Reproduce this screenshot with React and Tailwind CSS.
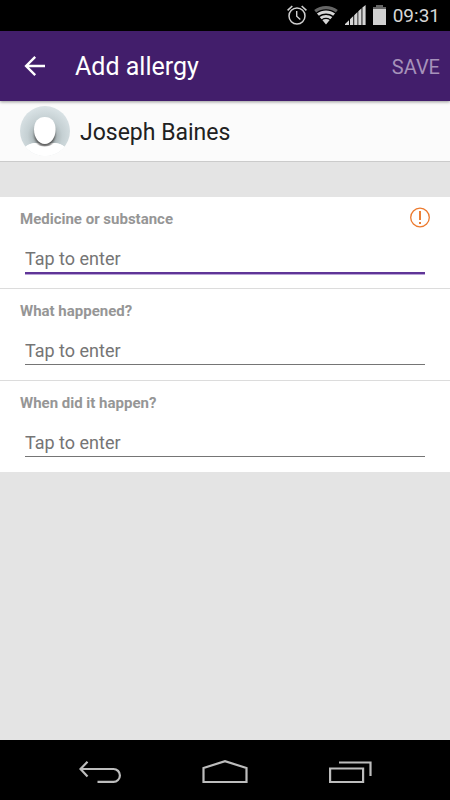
import React, { useState } from "react";

const FIELDS = [
  { id: "substance", label: "Medicine or substance", active: true, required: true },
  { id: "reaction", label: "What happened?" },
  { id: "date", label: "When did it happen?" },
];

export default function App() {
  const [values, setValues] = useState({});

  const handleChange = (id, value) => {
    setValues((prev) => ({ ...prev, [id]: value }));
  };

  return (
    <div className="min-h-screen flex flex-col bg-[#e4e4e4] font-['Roboto',sans-serif]">
      <StatusBar />
      <header className="relative z-10 flex items-center h-[70px] pt-[2px] pl-5 pr-[10px] bg-[#421e6b] shadow-[0_1px_3px_rgba(0,0,0,0.4)]">
        <button aria-label="Back" className="w-[30px] h-[30px] flex items-center justify-center">
          <svg width="22" height="22" viewBox="0 0 22 22" fill="none" stroke="#fff" strokeWidth="2.4">
            <path d="M21 10H3M11.2.9 2.1 10l9.1 9.1" />
          </svg>
        </button>
        <h1 className="flex-1 ml-[25px] text-[25px] leading-8 text-white">Add allergy</h1>
        <button className="text-xl text-[#a692ba]">SAVE</button>
      </header>

      <section className="flex items-center gap-[10px] px-5 py-[5px] bg-[#fbfbfb] border-b border-[#cbcbcb]">
        <Avatar />
        <h2 className="pt-[3px] text-[23px] leading-8 text-[#212121]">Joseph Baines</h2>
      </section>

      <form className="mt-[35px] bg-white" onSubmit={(e) => e.preventDefault()}>
        {FIELDS.map((field) => (
          <Field
            key={field.id}
            field={field}
            value={values[field.id] || ""}
            onChange={(value) => handleChange(field.id, value)}
          />
        ))}
      </form>

      <NavBar />
    </div>
  );
}

const Field = ({ field, value, onChange }) => (
  <div className="px-5 pt-3 pb-[15px] border-b border-[#dcdcdc] last:border-b-0">
    <div className="flex items-end justify-between h-5">
      <label htmlFor={field.id} className="text-[15px] leading-5 font-bold text-[#969696]">
        {field.label}
      </label>
      {field.required && <RequiredIcon />}
    </div>
    <div className="px-[5px] mt-[15px]">
      <input
        id={field.id}
        type="text"
        value={value}
        onChange={(e) => onChange(e.target.value)}
        placeholder="Tap to enter"
        className={`block w-full h-[29px] text-lg leading-7 text-[#212121] placeholder:text-[#757575] border-b outline-none ${field.active ? "border-[#5f3597] shadow-[0_1px_0_#5f3597,0_2px_0_#b9a3d6]" : "border-[#757575]"}`}
      />
    </div>
  </div>
);

const RequiredIcon = () => (
  <svg width="22" height="22" viewBox="0 0 22 22" fill="none" stroke="#ec7a2e">
    <circle cx="12" cy="10.5" r="9.3" strokeWidth="1.3" />
    <path d="M12 4v9M12 15v2" strokeWidth="1.9" />
  </svg>
);

const Avatar = () => (
  <svg width="50" height="50" viewBox="0 0 50 50">
    <defs>
      <radialGradient id="avatar-bg" cx="25" cy="30" r="29" gradientUnits="userSpaceOnUse">
        <stop offset="0.3" stopColor="#a3adaf" />
        <stop offset="0.6" stopColor="#c5d0d3" />
        <stop offset="1" stopColor="#d9e2e5" />
      </radialGradient>
      <clipPath id="avatar-clip">
        <circle cx="25" cy="25" r="25" />
      </clipPath>
      <filter id="avatar-blur" x="-50%" y="-50%" width="200%" height="200%">
        <feGaussianBlur stdDeviation="1.2" />
      </filter>
    </defs>
    <g clipPath="url(#avatar-clip)">
      <rect width="50" height="50" fill="url(#avatar-bg)" />
      <path d="M0 52V46C5 40 9 37.5 16 37h18c7 .5 11 3 16 9v6z" fill="#fff" />
      <ellipse cx="24.8" cy="28" rx="10.4" ry="12.8" fill="#444" opacity="0.85" filter="url(#avatar-blur)" />
      <path d="M0 52V46C5 40 9 37.5 15 37c5 4.8 14.5 4.8 19.500 0C41 37.5 45 40 50 46v6z" fill="#fff" />
      <path d="M24.800 11c-6.600 0-10.800 4.800-10.800 12.500C14 31.500 18.500 38 24.800 38s10.800-6.500 10.800-14.500C35.600 15.800 31.400 11 24.800 11z" fill="#fff" />
    </g>
  </svg>
);

const StatusBar = () => (
  <div className="flex items-center justify-end gap-[7px] h-[31px] pb-px pr-[10px] bg-black">
    <svg width="20" height="20" viewBox="0 0 20 20" fill="none" stroke="#d0d0d0">
      <circle cx="10" cy="11" r="8" strokeWidth="1.5" />
      <path d="M9.7 6v5.300l3.600 3.200" strokeWidth="1.4" />
      <path d="M.6 5.300 5.300 1M19.400 5.300 14.700 1" strokeWidth="1.6" />
    </svg>
    <svg width="24" height="20" viewBox="0 0 24 20">
      <path d="M.2 4.900C7-.4 17-.4 23.800 4.900l-2 2.500C16 3.300 8 3.300 2.200 7.400z" fill="#666" />
      <path d="M2.900 8.400c5.400-4 12.800-4 18.200 0l-2 2.400c-4.200-3-10-3-14.200 0zM5.700 11.900c3.800-2.700 8.800-2.700 12.600 0l-1.900 2.300c-2.700-1.900-6.100-1.900-8.800 0zM8.300 15c2.300-1.500 5.100-1.500 7.400 0L12 19.500z" fill="#d6d6d6" />
    </svg>
    <svg width="21" height="20" viewBox="0 0 21 20" fill="#d6d6d6">
      <path d="M0 20v-1l4-3.800V20zM5 20v-5.700l3.300-3.200V20zM9.200 20v-9.700l3.300-3.200V20zM13.300 20V6.300l3.200-3.100V20zM17.400 20V2.400L20.600 0v20z" />
    </svg>
    <svg width="13" height="20" viewBox="0 0 13 20">
      <path d="M3 0h7v2h3v3H0V2h3z" fill="#666" />
      <path d="M0 4h13v16H0z" fill="#d0d0d0" />
    </svg>
    <span className="pt-[3px] text-[19px] text-[#d6d6d6]">09:31</span>
  </div>
);

const NavBar = () => (
  <nav className="flex items-center justify-center gap-[81px] h-[60px] pt-1 mt-auto bg-black">
    <button aria-label="Back">
      <svg width="42" height="24" viewBox="0 0 42 24" fill="none" stroke="#bdbdbd" strokeWidth="2.2">
        <path d="M1.500 9H34.500a6.400 6.400 0 0 1 0 12.800H18.500M8.500 1.800 1.500 9l7 7.500" />
      </svg>
    </button>
    <button aria-label="Home">
      <svg width="46" height="24" viewBox="0 0 46 24" fill="none" stroke="#bdbdbd" strokeWidth="2.2">
        <path d="M1.500 8 23 1.200 44.500 8v14h-43z" />
      </svg>
    </button>
    <button aria-label="Recent apps">
      <svg width="43" height="24" viewBox="0 0 43 24" fill="none" stroke="#bdbdbd" strokeWidth="2.200">
        <path d="M1.100 8.500h33V22H1.100zM10 2.500h31.500V16" />
      </svg>
    </button>
  </nav>
);
